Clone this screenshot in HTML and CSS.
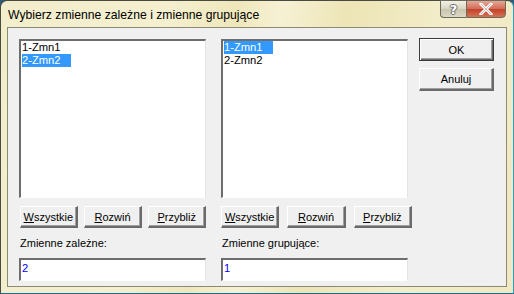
FILE: index.html
```html
<!DOCTYPE html>
<html lang="pl">
<head>
<meta charset="utf-8">
<link rel="stylesheet" href="styles.css">
</head>
<body>
<div class="window">
  <div class="titlebar">
    <div class="title">Wybierz zmienne zależne i zmienne grupujące</div>
    <div class="caption-buttons">
      <div class="cbtn help"><span>?</span></div>
      <div class="cbtn close">
        <svg width="16" height="12" viewBox="0 0 16 12"><path d="M3 1 L13 11 M13 1 L3 11" stroke="#fff" stroke-width="3" stroke-linecap="square"/><path d="M3 1 L13 11 M13 1 L3 11" stroke="#8a3a30" stroke-width="0.6" fill="none" opacity="0.6"/></svg>
      </div>
    </div>
  </div>
  <div class="client">
    <div class="col">
      <div class="listbox">
        <div class="item">1-Zmn1</div>
        <div class="item"><span class="sel">2-Zmn2</span></div>
      </div>
      <div class="btnrow left">
        <div class="btn w58"><u>W</u>szystkie</div>
        <div class="btn w59"><u>R</u>ozwiń</div>
        <div class="btn w58"><u>P</u>rzybliż</div>
      </div>
      <div class="label">Zmienne zależne:</div>
      <div class="input">2</div>
    </div>
    <div class="col">
      <div class="listbox">
        <div class="item"><span class="sel">1-Zmn1</span></div>
        <div class="item">2-Zmn2</div>
      </div>
      <div class="btnrow right">
        <div class="btn w59"><u>W</u>szystkie</div>
        <div class="btn w59"><u>R</u>ozwiń</div>
        <div class="btn w59"><u>P</u>rzybliż</div>
      </div>
      <div class="label">Zmienne grupujące:</div>
      <div class="input">1</div>
    </div>
    <div class="side">
      <div class="btn default">OK</div>
      <div class="btn side-btn">Anuluj</div>
    </div>
  </div>
</div>
</body>
</html>
```

FILE: styles.css
```css
* { box-sizing: border-box; }
html, body { margin: 0; padding: 0; }
body { width: 514px; height: 294px; overflow: hidden; background: #2a5d7a; }

.window {
  width: 514px;
  height: 294px;
  border: 1px solid #4a4a40;
  border-bottom-color: #1d6a8a;
  border-right-color: #2a9ac0;
  border-radius: 7px 7px 0 0;
  background: linear-gradient(100deg, #f2edcb 0%, #f4efcf 30%, #efe7bb 42%, #f6f1d4 50%, #ede5b6 62%, #f3edcb 80%, #efe8c2 100%);
  display: flex;
  flex-direction: column;
  font-family: "Liberation Sans", Arial, sans-serif;
}

.titlebar {
  height: 26px;
  display: flex;
  align-items: flex-start;
  justify-content: space-between;
  padding-left: 7px;
}
.title {
  font-family: "Liberation Sans", Arial, sans-serif;
  font-size: 12.2px;
  color: #000;
  margin-top: 7px;
}
.caption-buttons {
  display: flex;
  margin-right: 7px;
  margin-top: -1px;
}
.cbtn {
  height: 18px;
  border: 1px solid #6b6b5a;
  display: flex;
  align-items: center;
  justify-content: center;
}
.help {
  width: 26px;
  border-right: none;
  border-radius: 0 0 0 4px;
  background: linear-gradient(#f3f1e6, #d8d4c0 50%, #c9c4ac 51%, #dcd8c6);
}
.help span {
  font-family: "DejaVu Sans", sans-serif;
  font-weight: bold;
  font-size: 13px;
  color: #fff;
  text-shadow: 0 0 1px #555, 1px 0 0 #777, -1px 0 0 #777, 0 1px 0 #777, 0 -1px 0 #777;
}
.close {
  width: 40px;
  border-radius: 0 0 4px 0;
  background: linear-gradient(#e7a798, #d26a55 50%, #c2412a 51%, #d47356);
}

.client {
  margin: 0 6px 6px 6px;
  flex: 1;
  border: 1px solid #8c8a72;
  background: #f0f0f0;
  padding: 11px 0 0 11px;
  display: flex;
  align-items: flex-start;
}

.col {
  width: 187px;
  display: flex;
  flex-direction: column;
  margin-right: 15px;
  font-size: 11px;
}
.col + .col { margin-right: 11px; }

.listbox {
  height: 159px;
  background: #fff;
  border-style: solid;
  border-width: 2px 1px 1px 2px;
  border-color: #6d6d6d #e3e3e3 #ffffff #6d6d6d;
  padding: 0 0 0 1px;
  font-size: 11.2px;
  line-height: 13px;
}
.item { height: 13px; color: #000; white-space: nowrap; }
.sel {
  display: inline-block;
  width: 49px;
  background: #3399ff;
  color: #fff;
}

.btnrow {
  display: flex;
  margin-top: 8px;
  height: 22px;
}
.btnrow.left { gap: 6px; margin-left: 1px; }
.btnrow.right { gap: 8px; margin-left: 0; width: 191px; }
.w58 { width: 58px; }
.w59 { width: 59px; }

.btn {
  height: 22px;
  background: #f0f0f0;
  border-style: solid;
  border-width: 1px 2px 2px 1px;
  border-color: #ffffff #6a6a6a #6a6a6a #ffffff;
  box-shadow: inset -1px -1px 0 #a0a0a0;
  display: flex;
  align-items: center;
  justify-content: center;
  font-size: 11px;
  color: #000;
  white-space: nowrap;
}
.btn u { text-decoration-thickness: 1px; text-underline-offset: 1px; }

.label {
  margin-top: 8px;
  height: 15px;
  line-height: 15px;
  font-size: 11px;
  padding-left: 1px;
  color: #000;
}
.input {
  margin-top: 7px;
  height: 23px;
  background: #fff;
  border-style: solid;
  border-width: 2px 1px 1px 2px;
  border-color: #6d6d6d #e3e3e3 #ffffff #6d6d6d;
  color: #0000ff;
  font-size: 11.2px;
  line-height: 17px;
  padding-left: 1px;
}

.side {
  display: flex;
  flex-direction: column;
  width: 75px;
  gap: 7px;
  margin-top: -1px;
}
.side .btn { width: 75px; height: 23px; font-size: 11px; }
.btn.default {
  border: 1px solid #3c3c3c;
  box-shadow: inset 1px 1px 0 #ffffff, inset -1px -1px 0 #6a6a6a, inset -2px -2px 0 #a0a0a0;
}
```
